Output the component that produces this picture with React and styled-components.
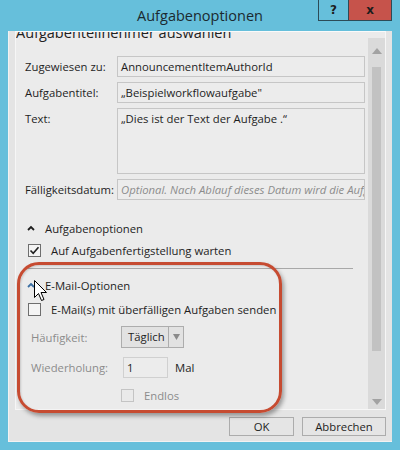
import React from "react";
import styled, { createGlobalStyle } from "styled-components";

const GlobalStyle = createGlobalStyle`
  html, body {
    margin: 0;
    padding: 0;
    background: #66bfdb;
  }
  * {
    box-sizing: border-box;
  }
`;

const Window = styled.div`
  position: relative;
  width: 400px;
  height: 450px;
  background: #66bfdb;
  display: flex;
  flex-direction: column;
  font-family: "Open Sans", "Noto Sans", sans-serif;
  color: #1a1a1a;
  overflow: hidden;
`;

const TitleBar = styled.div`
  height: 31px;
  flex: none;
  display: grid;
  grid-template-columns: 1fr auto 1fr;
  align-items: start;
`;

const Title = styled.div`
  grid-column: 2;
  font-size: 14.5px;
  line-height: 31px;
  color: #1b2a30;
`;

const TitleButtons = styled.div`
  grid-column: 3;
  justify-self: end;
  display: flex;
  margin-right: 8px;
`;

const TitleButton = styled.div`
  width: ${(p) => p.$w}px;
  height: 21px;
  display: flex;
  align-items: center;
  justify-content: center;
  font-family: "DejaVu Sans", sans-serif;
  font-weight: bold;
  font-size: 12px;
  color: #1d1d1d;
  background: ${(p) => (p.$close ? "#c6534b" : "transparent")};
  border: 1px solid #2c4b57;
  border-top: none;
  border-right: ${(p) => (p.$close ? "1px solid #2c4b57" : "none")};
`;

const Client = styled.div`
  flex: 1;
  margin: 0 8px 8px 8px;
  background: #e4e4e4;
  border-left: 1px solid #f2f2f2;
  border-bottom: 1px solid #f2f2f2;
  padding: 0 6px 0 6px;
  display: flex;
  flex-direction: column;
`;

const ScrollPanel = styled.div`
  height: 379px;
  flex: none;
  display: flex;
  background: #ebebeb;
  border: 1px solid #f6f6f6;
  border-top-color: #fafafa;
`;

const Content = styled.div`
  flex: 1;
  overflow: hidden;
  display: flex;
  flex-direction: column;
`;

const Header = styled.div`
  font-size: 14.5px;
  line-height: 20px;
  margin-top: -9px;
  color: #222;
  white-space: nowrap;
`;

const Form = styled.div`
  display: grid;
  grid-template-columns: 92px 248px;
  row-gap: 5px;
  padding-left: 9px;
  margin-top: 13px;
`;

const Label = styled.div`
  font-size: 11.3px;
  line-height: 21px;
  color: ${(p) => (p.$disabled ? "#8c8c8c" : "#1e1e1e")};
  white-space: nowrap;
`;

const Field = styled.div`
  height: ${(p) => p.$h || 21}px;
  border: 1px solid #c6c6c6;
  background: #ececec;
  font-size: 11.3px;
  line-height: 19px;
  padding: 0 3px;
  white-space: nowrap;
  overflow: hidden;
  color: #1e1e1e;
  font-style: ${(p) => (p.$placeholder ? "italic" : "normal")};
  ${(p) => p.$placeholder && "color: #8c8c8c;"}
`;

const SectionHead = styled.div`
  display: flex;
  align-items: center;
  height: 20px;
  padding-left: 11px;
  margin-top: ${(p) => p.$mt}px;
  font-size: 11.3px;
  color: #1e1e1e;
  gap: 10px;
`;

const CheckRow = styled.div`
  display: flex;
  align-items: center;
  height: 20px;
  padding-left: ${(p) => p.$pl || 12}px;
  margin-top: ${(p) => p.$mt || 0}px;
  gap: 10px;
  font-size: 11.3px;
  color: ${(p) => (p.$disabled ? "#8c8c8c" : "#1e1e1e")};
`;

const Box = styled.div`
  width: 13px;
  height: 13px;
  border: 1px solid ${(p) => (p.$disabled ? "#c4c4c4" : "#6e6e6e")};
  background: ${(p) => (p.$disabled ? "#eaeaea" : "#f4f4f4")};
  display: flex;
  align-items: center;
  justify-content: center;
`;

const Separator = styled.div`
  height: 1px;
  background: #a8a8a8;
  margin: 8px 15px 6px 12px;
`;

const OptionGrid = styled.div`
  display: grid;
  grid-template-columns: 90px 1fr;
  align-items: center;
  padding-left: 15px;
  row-gap: 9px;
  margin-top: 7px;
`;

const InlineGroup = styled.div`
  display: flex;
  align-items: center;
`;

const Dropdown = styled.div`
  width: 63px;
  height: 22px;
  display: flex;
  border: 1px solid #adadad;
  background: #e2e2e2;
  font-size: 11.3px;
`;

const DropValue = styled.div`
  flex: 1;
  line-height: 20px;
  padding-left: 6px;
  color: #1e1e1e;
`;

const DropArrow = styled.div`
  width: 15px;
  border-left: 1px solid #adadad;
  display: flex;
  align-items: center;
  justify-content: center;
`;

const NumberInput = styled.div`
  width: 45px;
  height: 21px;
  margin-left: 2px;
  border: 1px solid #d0d0d0;
  background: #ececec;
  font-size: 11.3px;
  line-height: 19px;
  padding-left: 3px;
  color: #1e1e1e;
`;

const Unit = styled.div`
  font-size: 11.3px;
  padding-left: 7px;
  color: #1e1e1e;
`;

const ScrollBar = styled.div`
  width: 17px;
  flex: none;
  background: #dadada;
  display: flex;
  flex-direction: column;
  align-items: center;
  padding: 10px 0 4px;
  margin-top: 6px;
`;

const Thumb = styled.div`
  width: 9px;
  height: 284px;
  background: #c2c2c2;
  margin-top: 13px;
`;

const Spacer = styled.div`
  flex: 1;
`;

const ButtonRow = styled.div`
  display: flex;
  justify-content: flex-end;
  gap: 8px;
  margin-top: 7px;
`;

const Button = styled.div`
  width: ${(p) => p.$w}px;
  height: 19px;
  border: 1px solid #acacac;
  background: #e5e5e5;
  font-size: 11.3px;
  line-height: 17px;
  text-align: center;
  color: #1e1e1e;
`;

const Highlight = styled.div`
  position: absolute;
  left: 17px;
  top: 262px;
  width: 265px;
  height: 151px;
  border: 3px solid #c64b31;
  border-radius: 22px;
  box-shadow: 2px 3px 4px rgba(0, 0, 0, 0.35), inset 1px 1px 2px rgba(0, 0, 0, 0.15);
  pointer-events: none;
`;

const Cursor = styled.svg`
  position: absolute;
  left: 34px;
  top: 280px;
`;

const Chevron = ({ color }) => (
  <svg width="8" height="6" viewBox="0 0 8 6">
    <path d="M1 5 L4 2 L7 5" fill="none" stroke={color} strokeWidth="1.8" />
  </svg>
);

const Tri = ({ up, color = "#a2a2a2", w = 10 }) => (
  <svg width={w} height="6" viewBox={`0 0 ${w} 6`}>
    <path d={up ? `M0 6 L${w / 2} 0 L${w} 6 Z` : `M0 0 L${w / 2} 6 L${w} 0 Z`} fill={color} />
  </svg>
);

const Check = () => (
  <svg width="11" height="11" viewBox="0 0 11 11">
    <path d="M1.5 5.5 L4.2 8.3 L9.5 2.2" fill="none" stroke="#202020" strokeWidth="1.6" />
  </svg>
);

export default function App() {
  return (
    <>
      <GlobalStyle />
      <Window>
        <TitleBar>
          <Title>Aufgabenoptionen</Title>
          <TitleButtons>
            <TitleButton $w={30}>?</TitleButton>
            <TitleButton $w={44} $close>
              x
            </TitleButton>
          </TitleButtons>
        </TitleBar>
        <Client>
          <ScrollPanel>
            <Content>
              <Header>Aufgabenteilnehmer auswählen</Header>
              <Form>
                <Label>Zugewiesen zu:</Label>
                <Field>AnnouncementItemAuthorId</Field>
                <Label>Aufgabentitel:</Label>
                <Field>„Beispielworkflowaufgabe"</Field>
                <Label>Text:</Label>
                <Field $h={66}>„Dies ist der Text der Aufgabe .“</Field>
                <Label>Fälligkeitsdatum:</Label>
                <Field $placeholder>Optional. Nach Ablauf dieses Datum wird die Aufgabe</Field>
              </Form>
              <SectionHead $mt={18}>
                <Chevron color="#1e1e1e" />
                Aufgabenoptionen
              </SectionHead>
              <CheckRow $mt={2}>
                <Box>
                  <Check />
                </Box>
                Auf Aufgabenfertigstellung warten
              </CheckRow>
              <Separator />
              <SectionHead $mt={0}>
                <Chevron color="#3b6fa3" />
                E-Mail-Optionen
              </SectionHead>
              <CheckRow $mt={4}>
                <Box />
                E-Mail(s) mit überfälligen Aufgaben senden
              </CheckRow>
              <OptionGrid>
                <Label $disabled>Häufigkeit:</Label>
                <InlineGroup>
                  <Dropdown>
                    <DropValue>Täglich</DropValue>
                    <DropArrow>
                      <Tri w={7} color="#8a8a8a" />
                    </DropArrow>
                  </Dropdown>
                </InlineGroup>
                <Label $disabled>Wiederholung:</Label>
                <InlineGroup>
                  <NumberInput>1</NumberInput>
                  <Unit>Mal</Unit>
                </InlineGroup>
              </OptionGrid>
              <CheckRow $pl={105} $mt={7} $disabled>
                <Box $disabled />
                Endlos
              </CheckRow>
            </Content>
            <ScrollBar>
              <Tri up />
              <Thumb />
              <Spacer />
              <Tri />
            </ScrollBar>
          </ScrollPanel>
          <ButtonRow>
            <Button $w={65}>OK</Button>
            <Button $w={84}>Abbrechen</Button>
          </ButtonRow>
        </Client>
        <Highlight />
        <Cursor width="14" height="23" viewBox="0 0 14 23">
          <path
            d="M0.5 0.5 L0.5 17.5 L4.5 13.5 L7.5 20.5 L10 19.5 L7 12.5 L12.5 12.5 Z"
            fill="#fff"
            stroke="#000"
            strokeWidth="1"
          />
        </Cursor>
      </Window>
    </>
  );
}
